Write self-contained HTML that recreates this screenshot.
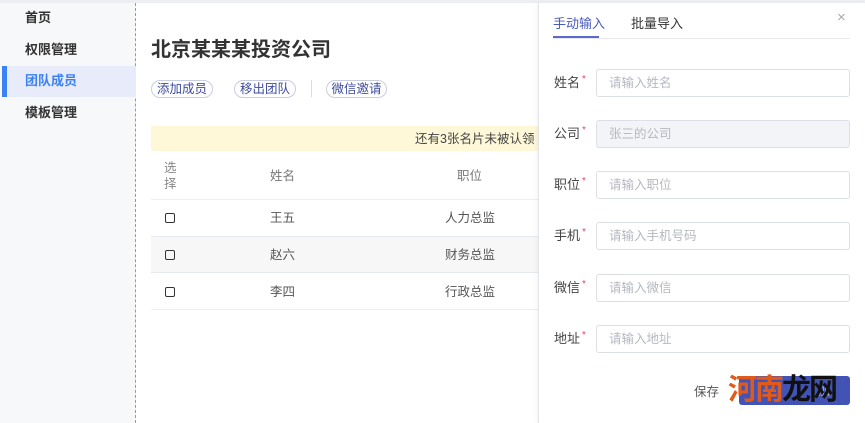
<!DOCTYPE html>
<html><head><meta charset="utf-8"><style>
*{margin:0;padding:0;box-sizing:border-box}
body{width:865px;height:423px;overflow:hidden;background:#fff;font-family:"Liberation Sans","Noto Sans CJK SC",sans-serif;position:relative;color:#333}
.a{position:absolute;white-space:nowrap}
.side{position:absolute;left:0;top:3px;width:136px;height:420px;background:#f7f8fa;border-right:1px dashed #999}
.top{position:absolute;left:0;top:0;width:865px;height:3px;background:#eceef1}
.nav{position:absolute;left:25px;font-size:13px;font-weight:bold;color:#333;line-height:16px}
.pill{position:absolute;top:80px;height:18px;border:1px solid #c9cde0;border-radius:9px;font-size:12.5px;color:#3d4b9e;line-height:16px;text-align:center}
.cell{position:absolute;font-size:12.5px;color:#555;line-height:16px}
.cb{position:absolute;left:165px;width:10px;height:10px;border:1.3px solid #333;border-radius:2px}
.panel{position:absolute;left:538px;top:3px;width:327px;height:420px;background:#fff;border-left:1px solid #e3e5ea;box-shadow:-2px 0 4px rgba(0,0,0,.04)}
.lab{position:absolute;left:554px;font-size:13px;color:#444;line-height:16px}
.lab i{color:#e0447a;font-style:normal;font-size:10px;vertical-align:top;margin-left:2px;line-height:10px}
.inp{position:absolute;left:596px;width:254px;height:28px;border:1px solid #dcdfe6;border-radius:3px;font-size:12.5px;color:#b5b8bf;padding-left:12px;line-height:26px}
</style></head><body>
<div class="top"></div>
<div class="side"></div>
<div class="nav" style="top:10px">首页</div>
<div class="nav" style="top:42px">权限管理</div>
<div class="a" style="left:2px;top:66px;width:134px;height:31px;background:#e8ebfa"></div>
<div class="a" style="left:2px;top:66px;width:5px;height:31px;background:#3b82f6"></div>
<div class="nav" style="top:73px;color:#3b82f6">团队成员</div>
<div class="nav" style="top:105px">模板管理</div>

<div class="a" style="left:151px;top:33px;font-size:20px;font-weight:bold;color:#333">北京某某某投资公司</div>
<div class="pill" style="left:151px;width:62px">添加成员</div>
<div class="pill" style="left:234px;width:62px">移出团队</div>
<div class="a" style="left:311px;top:80px;width:1px;height:17px;background:#ddd"></div>
<div class="pill" style="left:326px;width:61px">微信邀请</div>

<div class="a" style="left:151px;top:126px;width:387px;height:25px;background:#fef8d9"></div>
<div class="cell" style="left:415px;top:131px;color:#444">还有3张名片未被认领</div>
<div class="cell" style="left:164px;top:160px;line-height:16px;color:#888">选<br>择</div>
<div class="cell" style="left:270px;top:168px;color:#777">姓名</div>
<div class="cell" style="left:457px;top:168px;color:#777">职位</div>
<div class="a" style="left:151px;top:199px;width:387px;height:1px;background:#eceef3"></div>
<div class="a" style="left:151px;top:236px;width:387px;height:37px;background:#f7f7f8;border-top:1px solid #e6e9f2;border-bottom:1px solid #e6e9f2"></div>
<div class="a" style="left:151px;top:309px;width:387px;height:1px;background:#eceef3"></div>
<div class="cb" style="top:213px"></div><div class="cell" style="left:270px;top:210px">王五</div><div class="cell" style="left:445px;top:210px">人力总监</div>
<div class="cb" style="top:250px"></div><div class="cell" style="left:270px;top:247px">赵六</div><div class="cell" style="left:445px;top:247px">财务总监</div>
<div class="cb" style="top:287px"></div><div class="cell" style="left:270px;top:284px">李四</div><div class="cell" style="left:445px;top:284px">行政总监</div>

<div class="panel"></div>
<div class="a" style="left:553px;top:16px;font-size:13px;color:#4a5bbf;line-height:16px">手动输入</div>
<div class="a" style="left:631px;top:16px;font-size:13px;color:#333;line-height:16px">批量导入</div>
<div class="a" style="left:553px;top:38px;width:297px;height:1px;background:#e6e8ee"></div>
<div class="a" style="left:553px;top:36px;width:46px;height:2px;background:#5a6acb"></div>
<div class="a" style="left:837px;top:9px;font-size:15px;color:#aaa;line-height:18px">×</div>

<div class="lab" style="top:75px">姓名<i>*</i></div><div class="inp" style="top:69px">请输入姓名</div>
<div class="lab" style="top:126px">公司<i>*</i></div><div class="inp" style="top:120px;background:#f3f4f8">张三的公司</div>
<div class="lab" style="top:177px">职位<i>*</i></div><div class="inp" style="top:171px">请输入职位</div>
<div class="lab" style="top:228px">手机<i>*</i></div><div class="inp" style="top:222px">请输入手机号码</div>
<div class="lab" style="top:280px">微信<i>*</i></div><div class="inp" style="top:274px">请输入微信</div>
<div class="lab" style="top:331px">地址<i>*</i></div><div class="inp" style="top:325px">请输入地址</div>

<div class="a" style="left:694px;top:384px;font-size:12.5px;color:#555;line-height:16px">保存</div>
<div class="a" style="left:739px;top:376px;width:111px;height:29px;background:#4253b4;border-radius:3px"></div>
<div class="a" style="left:818px;top:383px;font-size:12.5px;color:#aab;line-height:16px">加</div>
<div class="a" style="left:728px;top:374px;font-size:29px;line-height:32px;font-weight:bold;color:#e05a1c;letter-spacing:-2px">河南<span style="color:#111">龙网</span></div>
</body></html>
